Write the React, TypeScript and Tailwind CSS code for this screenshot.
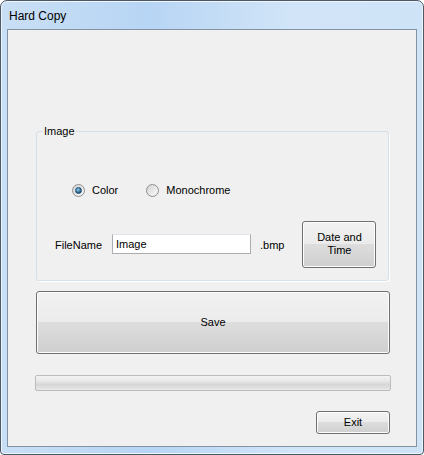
import React from 'react';

function Radio({ checked, label }: { checked?: boolean; label: string }) {
    return (
        <div className="flex items-center gap-[7px]">
            <div className="w-[13px] h-[13px] rounded-full border border-[#8f8f8f] bg-[linear-gradient(135deg,#d4d4d4,#fafafa)] flex items-center justify-center">
                {checked && (
                    <div className="w-[7px] h-[7px] rounded-full bg-[radial-gradient(circle_at_40%_35%,#8fd0f5,#24577e_70%)] border border-[#1f4d70]" />
                )}
            </div>
            <span>{label}</span>
        </div>
    );
}

function WinButton({ className, children }: { className: string; children: React.ReactNode }) {
    return (
        <div
            className={`rounded-[3px] border border-[#707070] shadow-[inset_0_0_0_1px_#fcfcfc] bg-[linear-gradient(to_bottom,#f2f2f2_0%,#ebebeb_50%,#dddddd_50%,#cfcfcf_100%)] flex items-center justify-center text-center leading-[13px] text-black ${className}`}
        >
            {children}
        </div>
    );
}

export default function App() {
    return (
        <div className="w-[424px] h-[455px] bg-white font-['Liberation_Sans',Arial,sans-serif] text-[11px] text-black">
            <div className="w-full h-full rounded-t-[7px] rounded-b-[4px] border border-[#4c5866] bg-[linear-gradient(to_right,#c9dff5,#b7d5f4_35%,#d2e5f8_70%,#cfe3f7)] shadow-[inset_0_0_0_1px_#eef5fc] flex flex-col px-[6px] pb-[7px]">
                {/* Title bar */}
                <div className="h-[28px] flex items-center pl-[2px] pt-[1px] text-[12px]">Hard Copy</div>

                {/* Client area */}
                <div className="flex-1 border border-[#8393a4] bg-[#f0f0f0] flex flex-col pl-[28px]">
                    {/* Group box */}
                    <div className="relative mt-[101px] w-[353px] h-[150px] rounded-[3px] border border-[#d5dfe5] shadow-[1px_1px_0_#ffffff] flex flex-col">
                        <span className="absolute -top-[7px] left-[6px] bg-[#f0f0f0] px-[1px] leading-[12px]">Image</span>

                        <div className="mt-[50px] ml-[35px] flex items-center gap-[28px]">
                            <Radio checked label="Color" />
                            <Radio label="Monochrome" />
                        </div>

                        <div className="mt-[22px] ml-[18px] flex items-center">
                            <span className="w-[57px] pt-[3px]">FileName</span>
                            <div className="w-[139px] h-[20px] border border-[#abadb3] border-t-[#e2e3ea] bg-white flex items-center pl-[3px]">Image</div>
                            <span className="ml-[9px] pt-[3px]">.bmp</span>
                            <WinButton className="ml-[18px] w-[74px] h-[47px]">
                                Date and
                                <br />
                                Time
                            </WinButton>
                        </div>
                    </div>

                    {/* Save */}
                    <WinButton className="mt-[10px] w-[354px] h-[63px]">Save</WinButton>

                    {/* Progress bar */}
                    <div className="mt-[21px] -ml-[1px] w-[356px] h-[16px] rounded-[2px] border border-[#bcbcbc] bg-[linear-gradient(to_bottom,#f3f3f3,#e6e6e6_40%,#d6d6d6_60%,#e8e8e8)]" />

                    {/* Exit */}
                    <WinButton className="mt-[20px] ml-[280px] w-[74px] h-[23px]">Exit</WinButton>
                </div>
            </div>
        </div>
    );
}
